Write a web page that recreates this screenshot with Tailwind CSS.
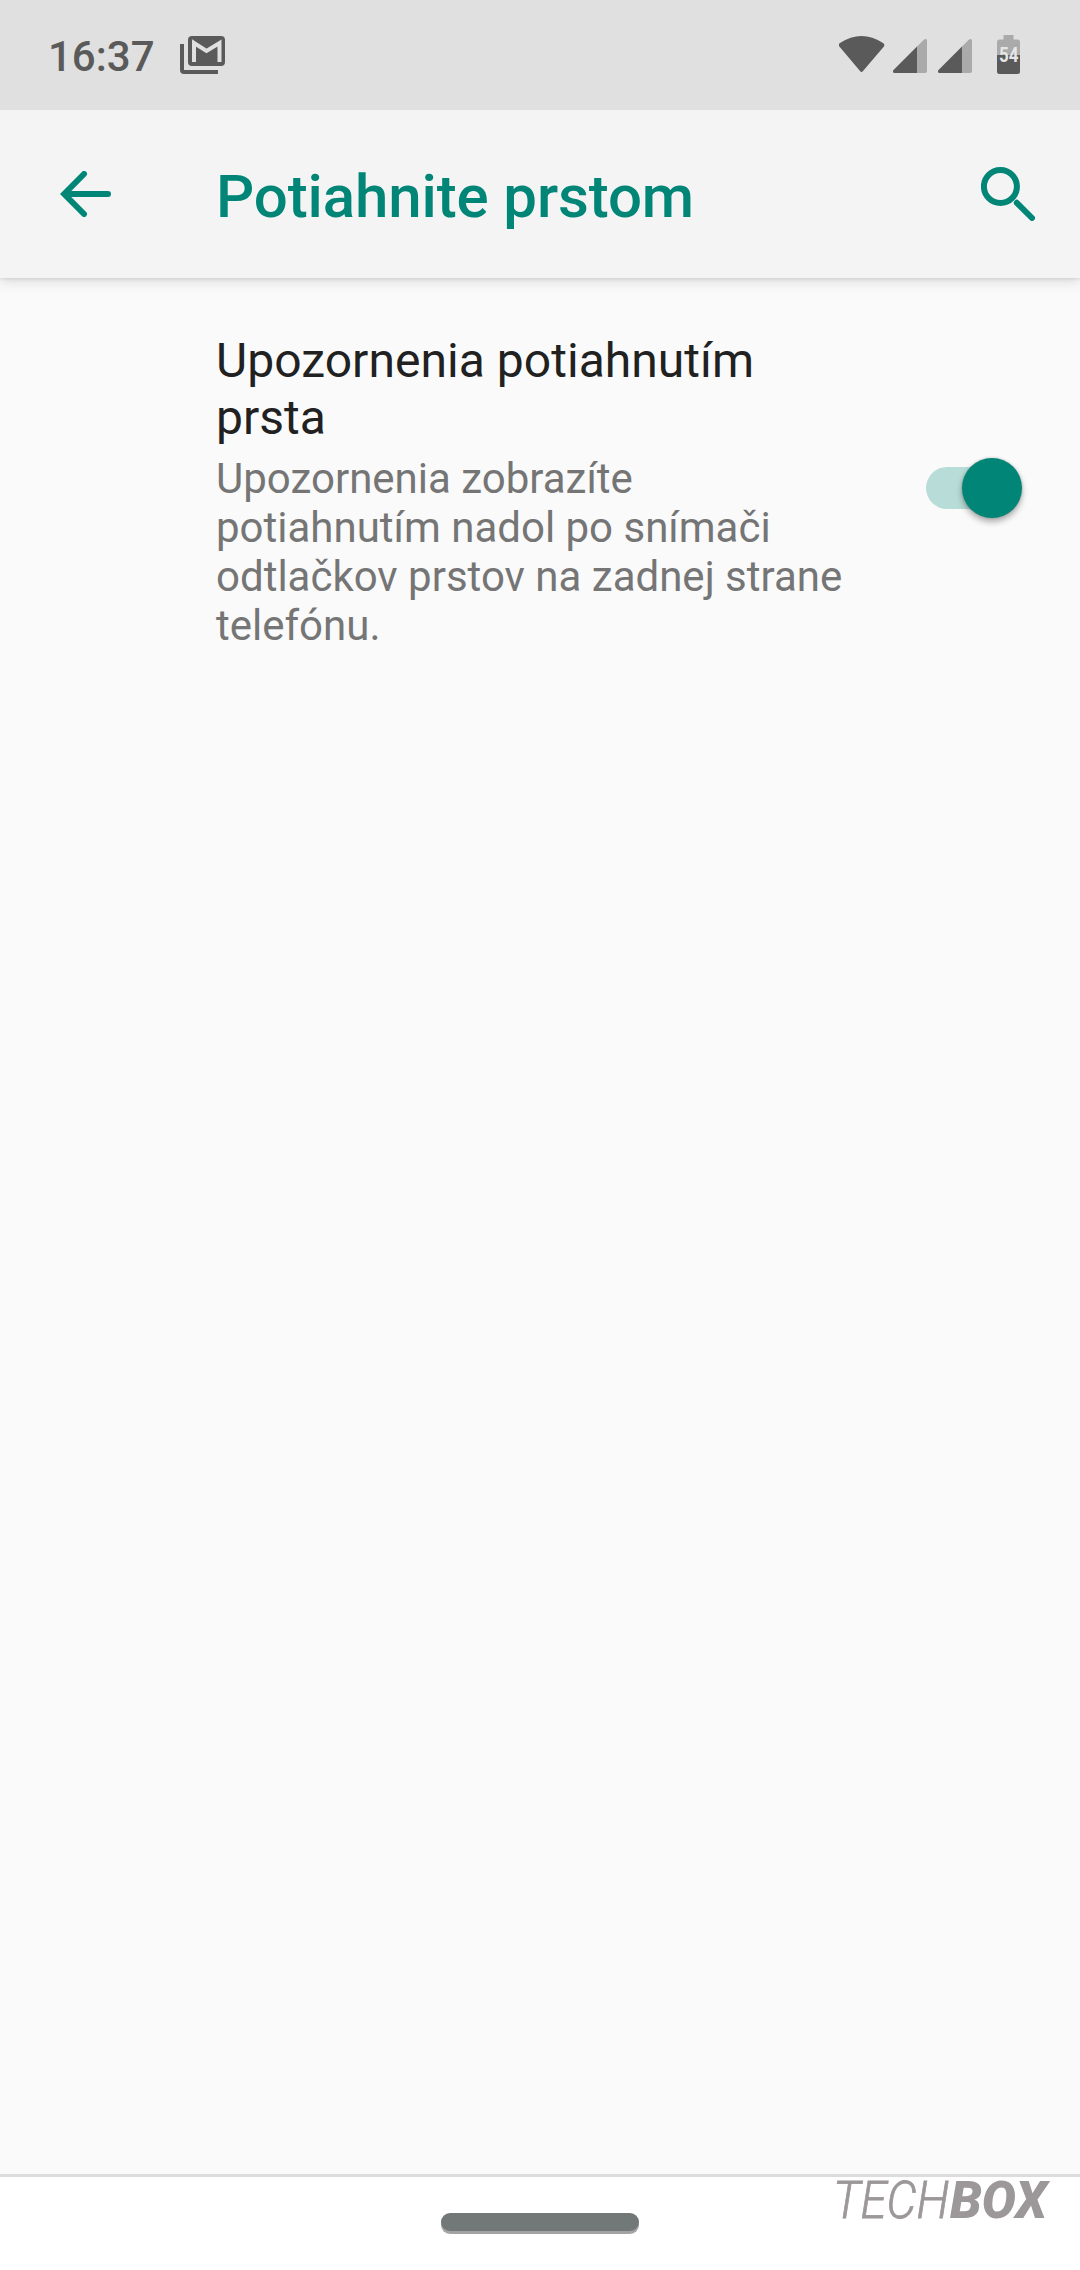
<!DOCTYPE html>
<html lang="sk">
  <head>
    <meta charset="UTF-8" />
    <meta name="viewport" content="width=device-width, initial-scale=1.0" />
    <title>Potiahnite prstom</title>
    <script src="https://cdn.jsdelivr.net/npm/@tailwindcss/browser@4"></script>
  </head>
  <body class="bg-[#fafafa] font-['Roboto',sans-serif]">
    <div class="flex flex-col w-[1080px] h-[2270px] overflow-hidden">
      <!-- Status bar -->
      <div class="relative z-10 flex items-center justify-between h-[110px] shrink-0 pl-12 bg-[#e0e0e0] text-[#5a5a5a]">
        <div class="flex items-center">
          <span class="w-[132px] pt-[3px] text-[42px] leading-[50px] font-medium">16:37</span>
          <svg class="w-[45px] h-[38px]" viewBox="0 0 45 38" fill="currentColor">
            <path d="M0 8h4v26h34v4H4a4 4 0 0 1-4-4z" />
            <rect x="8" width="37" height="30" rx="4" />
            <path d="M14 26V7L26.500 15L39.500 7V26" fill="none" stroke="#e0e0e0" stroke-width="4" />
          </svg>
        </div>
        <svg class="w-[241px] h-[110px]" viewBox="839 0 241 110" fill="currentColor">
          <!-- Wi-Fi -->
          <path d="M840 43Q861.500 29 883 43Q885.500 44.500 883.500 47L863 71Q861.500 73 860 71L839.800 47Q837.500 44.500 840 43z" />
          <!-- SIM 1 -->
          <path d="M917 46.500L923.500 40Q925 38.500 926 39Q927 39.400 927 41V71Q927 73 925 73H917z" fill="#aaa" />
          <path d="M917 46.500V73H894.500Q893 73 893 71.500V70.500z" />
          <!-- SIM 2 -->
          <path d="M962 46.500L968.500 40Q970 38.500 971 39Q972 39.400 972 41V71Q972 73 970 73H962z" fill="#aaa" />
          <path d="M962 46.500V73H939.500Q938 73 938 71.500V70.500z" />
          <!-- Battery -->
          <path d="M997 55V42a2.500 2.500 0 0 1 2.500-2.500H1003.500V35H1013.500V39.500H1017.500a2.500 2.500 0 0 1 2.500 2.500V55z" fill="#aaa" />
          <path d="M997 55H1020V71.500a2.500 2.500 0 0 1-2.500 2.500H999.500a2.500 2.500 0 0 1-2.500-2.500z" />
          <text x="999" y="62" textLength="19.500" lengthAdjust="spacingAndGlyphs" font-size="20" font-weight="700" fill="#e6e6e6">54</text>
        </svg>
      </div>

      <!-- Toolbar -->
      <header class="relative flex items-center h-[168px] shrink-0 pl-[60px] pr-[45px] bg-[#f4f4f4] text-[#008577] shadow-[0_2px_2px_rgba(0,0,0,0.06),0_4px_12px_rgba(0,0,0,0.12)]">
        <svg class="w-[51px] h-[46px]" viewBox="60 171 51 46" fill="none" stroke="currentColor" stroke-width="6" stroke-linecap="round">
          <path d="M84 174L64.200 194L84 214M66 194H108" />
        </svg>
        <h1 class="grow ml-[105px] pt-1.5 text-[60px] leading-[70px] font-medium tracking-[-0.12px]">Potiahnite prstom</h1>
        <svg class="w-[54px] h-[54px]" viewBox="981 167 54 54" fill="none" stroke="currentColor" stroke-width="6" stroke-linecap="round">
          <circle cx="1000.400" cy="186.500" r="16.500" />
          <path d="M1016.800 202.800L1032 218" />
        </svg>
      </header>

      <!-- Preference -->
      <main class="grow">
        <div class="flex items-center pl-[216px] pr-[64px] pt-[54px]">
          <div class="w-[648px]">
            <h2 class="text-[48px] leading-[57px] tracking-[0.04px] text-[#212121]">Upozornenia potiahnutím prsta</h2>
            <p class="mt-2 text-[42px] leading-[49px] text-[#757575]">Upozornenia zobrazíte potiahnutím nadol po snímači odtlačkov prstov na zadnej strane telefónu.</p>
          </div>
          <div class="flex items-center justify-end ml-auto w-[96px] h-[60px] mb-[7px]">
            <div class="flex items-center w-[90px] h-[42px] rounded-full bg-[#b8dcd7]">
              <div class="ml-[35.5px] size-[60px] shrink-0 rounded-full bg-[#008577] shadow-[0_4px_6px_rgba(0,0,0,0.3),0_0_3px_rgba(0,0,0,0.2)]"></div>
            </div>
          </div>
        </div>
      </main>

      <!-- Navigation bar -->
      <footer class="relative flex justify-center h-24 shrink-0 border-t-3 border-[#dcdcdc] bg-white">
        <div class="mt-9 w-[198px] h-[18px] rounded-full bg-[#727777] shadow-[0_3px_0_#a3a3a3]"></div>
        <svg class="absolute right-[20px] -top-[10px] w-[230px] h-[70px]" viewBox="830 2167 230 70" fill="#9c9798" font-style="italic">
          <text x="833" y="2218" font-size="52" font-weight="300" textLength="116" lengthAdjust="spacingAndGlyphs" stroke="#9c9798" stroke-width="0.800">TECH</text>
          <text x="950" y="2218" font-size="52" font-weight="900" textLength="97" lengthAdjust="spacingAndGlyphs">BOX</text>
        </svg>
      </footer>
    </div>
  </body>
</html>
